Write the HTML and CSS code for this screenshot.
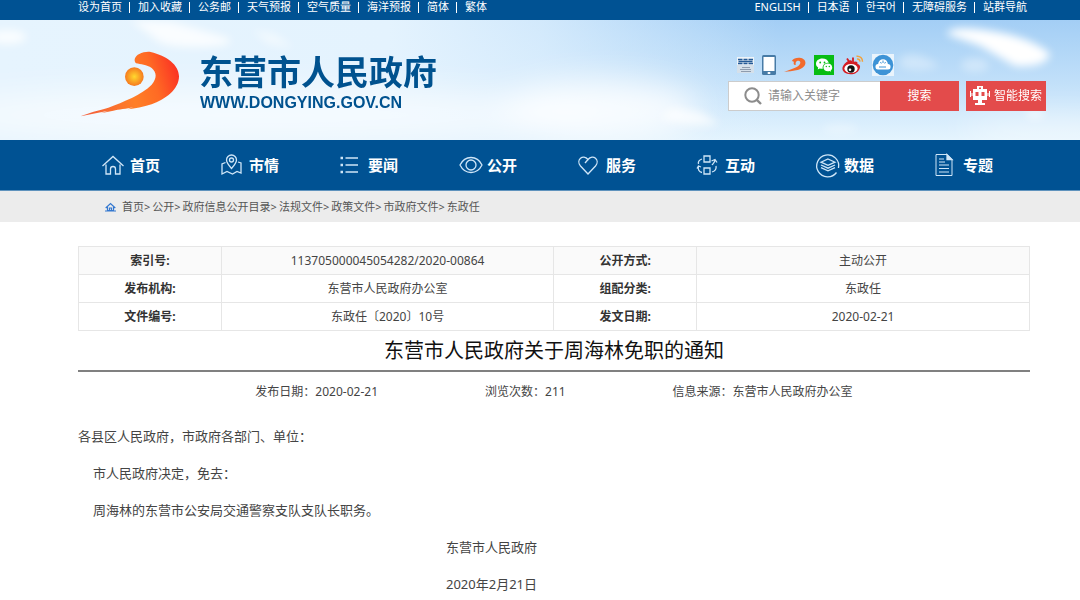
FILE: index.html
```html
<!DOCTYPE html>
<html lang="zh-CN">
<head>
<meta charset="utf-8">
<title>东营市人民政府关于周海林免职的通知</title>
<link rel="stylesheet" href="styles.css">
</head>
<body>
<div class="topbar">
  <ul class="links">
    <li><a href="#">设为首页</a></li><li><a href="#">加入收藏</a></li><li><a href="#">公务邮</a></li><li><a href="#">天气预报</a></li><li><a href="#">空气质量</a></li><li><a href="#">海洋预报</a></li><li><a href="#">简体</a></li><li><a href="#">繁体</a></li>
  </ul>
  <ul class="links">
    <li><a href="#">ENGLISH</a></li><li><a href="#" lang="ja">日本语</a></li><li><a href="#" lang="ko">한국어</a></li><li><a href="#">无障碍服务</a></li><li><a href="#">站群导航</a></li>
  </ul>
</div>

<header class="header">
  <svg class="sky" viewBox="0 0 1080 120" preserveAspectRatio="none" aria-hidden="true">
    <defs>
      <linearGradient id="skyV" x1="0" y1="0" x2="0" y2="1"><stop offset="0" stop-color="#a3cef5"/><stop offset=".5" stop-color="#c0dff9"/><stop offset="1" stop-color="#e4f4fe"/></linearGradient>
      <linearGradient id="skyH" x1="0" y1="0" x2="1" y2="0"><stop offset="0" stop-color="#e6f4fe"/><stop offset=".36" stop-color="#e4f3fe"/><stop offset=".5" stop-color="#e2f2fe" stop-opacity=".75"/><stop offset=".72" stop-color="#e2f2fe" stop-opacity="0"/></linearGradient>
      <filter id="soft" x="-30%" y="-60%" width="160%" height="220%"><feGaussianBlur stdDeviation="4"/></filter>
      <filter id="haze" x="-50%" y="-80%" width="200%" height="260%"><feGaussianBlur stdDeviation="16"/></filter>
    </defs>
    <rect width="1080" height="120" fill="url(#skyV)"/>
    <rect width="1080" height="120" fill="url(#skyH)"/>
    <g fill="#fff" filter="url(#haze)">
      <ellipse cx="600" cy="90" rx="100" ry="30" opacity=".8"/>
      <ellipse cx="260" cy="95" rx="340" ry="28" opacity=".6"/>
      <ellipse cx="1050" cy="112" rx="90" ry="14" opacity=".5"/>
    </g>
    <g fill="#fff" filter="url(#soft)">
      <path d="M130 0L172 2L228 18Q240 27 190 27Q160 27 152 16Z" opacity=".8"/>
      <path d="M252 10L275 14L294 28L268 24Z" opacity=".5"/>
      <ellipse cx="8" cy="17" rx="18" ry="7" opacity=".8"/>
      <path d="M672 88L700 92L720 104Q690 108 660 98Z" opacity=".7"/>
      <path d="M946 14Q952 5 985 10Q1030 16 1050 34Q1046 48 1015 46L980 26Z"/>
      <path d="M900 38Q915 28 940 46Q915 54 900 46Z" opacity=".35"/>
      <ellipse cx="975" cy="45" rx="14" ry="7" opacity=".35"/>
      <ellipse cx="840" cy="109" rx="18" ry="5" opacity=".3"/>
      <ellipse cx="1035" cy="94" rx="10" ry="5" opacity=".5"/>
    </g>
  </svg>
  <a class="brand" href="#">
    <svg class="brand-mark" viewBox="30 34 300 198" aria-hidden="true">
      <defs>
        <linearGradient id="flame" x1="0" y1=".6" x2="1" y2=".4"><stop offset="0" stop-color="#f4603a"/><stop offset=".5" stop-color="#ff7f27"/><stop offset=".75" stop-color="#ff6a24"/><stop offset="1" stop-color="#fb3524"/></linearGradient>
        <radialGradient id="sun"><stop offset="0" stop-color="#ffd92e"/><stop offset="1" stop-color="#f67a1f"/></radialGradient>
      </defs>
      <path fill="url(#flame)" d="M198 71C190 63 194 49 208 43C218 37 234 35 242 37C290 48 327 76 327 110C327 150 285 180 245 194C220 202 195 206 174 209L190 202C170 208 145 209 130 213L92 221L115 213L32 230C50 221 90 211 115 204C160 187 215 165 245 135C262 115 260 98 245 85C230 75 212 74 198 71Z"/>
      <circle cx="193" cy="111" r="28" fill="url(#sun)"/>
    </svg>
    <span class="brand-text">
      <span class="brand-name">东营市人民政府</span>
      <span class="brand-url">WWW.DONGYING.GOV.CN</span>
    </span>
  </a>
  <div class="tools">
    <div class="apps">
      <a href="#" aria-label="服务版"><svg width="17" height="16" viewBox="0 0 17 16"><rect width="17" height="16" fill="#d5e0ea"/><path d="M0 0h17v8H0z" fill="#eef4f9"/><path d="M1 2.500h4.500M6.500 2.500h4M11.500 2.500H16M1.500 4.500h14M1 6.500h4.500M6.500 6.500h4M11.500 6.500H16" stroke="#245a96" stroke-width="1.300"/><path d="M5 10.500h8M3 12.500h11M4 14.500h10" stroke="#8e9cae"/></svg></a>
      <a href="#" aria-label="手机版"><svg width="14" height="20" viewBox="0 0 14 20"><rect width="14" height="20" rx="1.500" fill="#477ba6"/><rect x="1.500" y="2" width="11" height="14" fill="#fff"/><rect x="5.500" y="17" width="3" height="2" rx="1" fill="#fff"/></svg></a>
      <a href="#" aria-label="东营"><svg width="22" height="18" viewBox="20 28 310 214"><path fill="#f26a2c" d="M130 80C150 38 200 30 242 33C290 38 327 70 322 110C315 165 250 200 190 210C140 220 90 226 22 234C90 205 180 180 225 145C255 118 262 85 225 76C195 70 175 105 188 132C165 140 150 125 158 100C160 88 150 82 130 80Z"/></svg></a>
      <a href="#" aria-label="微信"><svg width="20" height="20" viewBox="0 0 20 20"><rect width="20" height="20" fill="#08bd13"/><path d="M8.500 3.500C4.500 3.500 2 6 2 8.700c0 1.600.9 2.900 2.200 3.900L3.700 14.500l2.100-1c1 .3 2 .4 3 .3C8 10.500 10.500 7.800 14.800 7.800 14 5 11.500 3.500 8.500 3.500z" fill="#fff"/><path d="M18.200 12.400c0-2.200-2-3.900-4.400-3.900s-4.400 1.700-4.400 3.900 2 3.900 4.400 3.900c.6 0 1.200-.1 1.800-.3l1.500.8-.4-1.400c.9-.7 1.500-1.800 1.500-3z" fill="#fff"/><g fill="#08bd13"><circle cx="6.200" cy="7.500" r=".9"/><circle cx="10.500" cy="7.500" r=".9"/><circle cx="12.300" cy="11.500" r=".7"/><circle cx="15.300" cy="11.500" r=".7"/></g></svg></a>
      <a href="#" aria-label="微博"><svg width="22" height="20" viewBox="0 0 22 20"><path d="M7.500 5.500c1.500-.5 3 .2 2.700 1.800 3-1.200 5.800-1 5.300 1.600 2.200.6 3 2 2.400 4-1 3.800-5 6.400-9.400 6.400S.4 17 .4 13.600C.4 10.500 4 6.500 7.500 5.500z" fill="#d41c24"/><path d="M5 3.500l2 3M11 2.500v5" stroke="#d41c24" stroke-width="1.800"/><ellipse cx="9" cy="13.500" rx="6.600" ry="4.500" fill="#fff"/><circle cx="9" cy="14" r="3.700" fill="#111"/><circle cx="8" cy="14.800" r="1.300" fill="#fff"/><path d="M14.500 1.200c3.500-.5 6.300 2 6 5.600M15 4c1.900-.2 3 1 2.800 2.700" fill="none" stroke="#f3a13a" stroke-width="1.500"/></svg></a>
      <a href="#" aria-label="云平台"><svg width="22" height="22" viewBox="0 0 22 22"><rect width="22" height="22" fill="#eaf4fc"/><circle cx="11" cy="11" r="10.300" fill="#3d93d6"/><path d="M6 10.500C6.500 3.500 15.500 3.500 16 10.500z" fill="#fff"/><rect x="3.500" y="10" width="15" height="5.500" rx="2.500" fill="#fff"/><path d="M11 6.500V9M8.500 8l.8 1.500M13.500 8l-.8 1.500M7 13h7" stroke="#3d93d6"/></svg></a>
    </div>
    <form class="search">
      <label class="search-box">
        <svg width="18" height="18" viewBox="0 0 18 18" aria-hidden="true"><circle cx="8" cy="8" r="6.700" fill="none" stroke="#8c8c8c" stroke-width="2"/><path d="M12.800 12.800L17 17" stroke="#8c8c8c" stroke-width="2.400"/></svg>
        <input type="text" placeholder="请输入关键字" aria-label="请输入关键字">
      </label>
      <button class="btn btn-search" type="button">搜索</button>
      <button class="btn btn-smart" type="button"><svg width="20" height="20" viewBox="0 0 20 20" aria-hidden="true"><path fill="#fff" fill-rule="evenodd" d="M7 0h6v3h4v11h-5v3h3v2H5v-2h3v-3H3V3h4zM9 1.500V3h2V1.500zM5.500 6v4h3V6zM11.500 6v4h3V6z"/><path d="M.5 5v6M19.500 5v6M2 7v3M18 7v3" stroke="#fff"/></svg>智能搜索</button>
    </form>
  </div>
</header>

<nav class="nav">
  <a href="#"><svg viewBox="1 0 24 24"><path d="M1.500 13L12 3.500 22.500 13M5 11.500v9.500h4.500v-5a2.500 2.500 0 0 1 5 0v5H19v-9.500"/></svg>首页</a>
  <a href="#"><svg viewBox="1 0 24 24"><path d="M11.500 15.500C8 11.500 6.500 9.500 6.500 7a5 5 0 0 1 10 0c0 2.500-1.500 4.500-5 8.500z"/><circle cx="11.500" cy="7" r="2"/><path d="M5.500 9.500L2 11v10l5-2.500 5.500 2.500 4.500-2.500 4 1.500V10l-3-1"/></svg>市情</a>
  <a href="#"><svg viewBox="3 0 24 24"><path d="M8.500 5H21M8.500 12H21M8.500 19H21" stroke-width="1.600"/><path d="M3.500 5H6M3.500 12H6M3.500 19H6" stroke-width="2.400"/></svg>要闻</a>
  <a href="#"><svg viewBox="0 0 24 24"><path d="M1 12C6 2 18 2 23 12 18 22 6 22 1 12z"/><circle cx="12" cy="12" r="5"/></svg>公开</a>
  <a href="#"><svg viewBox="2 0 24 24"><path d="M12 21L4.500 13C-.5 7 7 .5 12 6.500 17 .5 24.500 7 19.500 13z"/><path d="M12 6.500L9 10"/></svg>服务</a>
  <a href="#"><svg viewBox="2 0 24 24"><path d="M9 3h6v6H9zM9 15h6v6H9zM7 6C4 7 3 9 3.500 11M3.500 13c-1 3 .5 6 3.500 6.500M2 15.500l1.500-2.500L6 14M17 19c3-1 4.500-3.500 4-6M17 12c1-1.500 3-2.500 3-5.500M16.500 8L20 6.500l2 3"/></svg>互动</a>
  <a href="#"><svg viewBox="0 0 24 24"><path d="M20.500 19.500A11 11 0 1 1 22.500 15"/><path d="M12 6l7 3.200-7 3.200-7-3.200zM5 12l7 3.200 7-3.200M5 14.600l7 3.200 7-3.200"/></svg>数据</a>
  <a href="#"><svg viewBox="3 0 24 24"><path d="M4 1.500h11l5 5v16H4zM7 6h5M7 9h6M7 12h10M7 15.500h10M7 19h10" stroke-width="1"/><path d="M15 1.500v5h5z" fill="#cfe6f8"/></svg>专题</a>
</nav>

<div class="crumbs">
  <svg width="11" height="10" viewBox="0 0 11 10" aria-hidden="true"><path d="M.7 6L5.500 1.500 10.300 6M2.500 5v3.500h6V5M4.500 8V6h2v2M0 9h11" fill="none" stroke="#3478d0" stroke-width="1.200"/></svg>
  <ol>
    <li><a href="#">首页</a></li><li><a href="#">公开</a></li><li><a href="#">政府信息公开目录</a></li><li><a href="#">法规文件</a></li><li><a href="#">政策文件</a></li><li><a href="#">市政府文件</a></li><li><a href="#">东政任</a></li>
  </ol>
</div>

<main class="page">
  <table class="info">
    <tr><th scope="row">索引号:</th><td>113705000045054282/2020-00864</td><th scope="row">公开方式:</th><td>主动公开</td></tr>
    <tr><th scope="row">发布机构:</th><td>东营市人民政府办公室</td><th scope="row">组配分类:</th><td>东政任</td></tr>
    <tr><th scope="row">文件编号:</th><td>东政任〔2020〕10号</td><th scope="row">发文日期:</th><td>2020-02-21</td></tr>
  </table>
  <h1>东营市人民政府关于周海林免职的通知</h1>
  <div class="meta"><span>发布日期：2020-02-21</span><span>浏览次数：211</span><span>信息来源：东营市人民政府办公室</span></div>
  <article class="body">
    <p>各县区人民政府，市政府各部门、单位：</p>
    <p class="indent">市人民政府决定，免去：</p>
    <p class="indent">周海林的东营市公安局交通警察支队支队长职务。</p>
    <div class="sign"><p>东营市人民政府</p><p>2020年2月21日</p></div>
  </article>
</main>
</body>
</html>
```
FILE: styles.css
```css
* { box-sizing: border-box; }
body, p, h1, ul, ol { margin: 0; padding: 0; }
body {
  background: #fff;
  color: #444;
  font: 12px/20px "Noto Sans", "Noto Sans CJK SC", "Noto Sans CJK KR", sans-serif;
}
a { color: inherit; text-decoration: none; }
ul, ol { list-style: none; }
svg { display: block; flex: none; }

.topbar {
  display: flex;
  justify-content: space-between;
  padding: 0 53px 6px 78px;
  background: #005293;
  color: #fff;
  font-size: 11px;
  line-height: 14px;
}
.links { display: flex; align-items: center; }
.links li { display: flex; align-items: center; white-space: nowrap; }
.links li + li::before {
  content: "";
  width: 1px;
  height: 11px;
  margin: 0 8px 0 7px;
  background: #fff;
}

.header {
  position: relative;
  display: flex;
  justify-content: space-between;
  align-items: flex-start;
  height: 120px;
  padding: 31px 34px 0 80px;
}
.sky { position: absolute; inset: 0; width: 100%; height: 100%; }
.brand { position: relative; display: flex; gap: 19px; color: #00528f; font-weight: 700; }
.brand-mark { width: 100px; height: 66px; }
.brand-text { display: flex; flex-direction: column; }
.brand-name { font-size: 34px; line-height: 42px; }
.brand-url { padding-left: 1px; font: 700 16px/20px "Liberation Sans", sans-serif; }

.tools { position: relative; padding-top: 2px; }
.apps { display: flex; align-items: center; gap: 8px; height: 24px; padding-left: 9px; }
.search { display: flex; margin-top: 4px; }
.search-box {
  display: flex;
  align-items: center;
  gap: 6px;
  width: 152px;
  height: 30px;
  padding-left: 15px;
  background: #fff;
  border: 1px solid #ccc;
  border-right: 0;
}
.search-box input {
  flex: 1;
  min-width: 0;
  padding: 0;
  border: 0;
  outline: 0;
  background: none;
  font: inherit;
}
.search-box input::placeholder { color: #8c8c8c; }
.btn {
  display: flex;
  align-items: center;
  justify-content: center;
  gap: 4px;
  height: 30px;
  padding: 0;
  border: 0;
  background: #e34b4b;
  color: #fff;
  font: inherit;
}
.btn-search { width: 79px; }
.btn-smart { width: 80px; margin-left: 7px; }

.nav {
  display: grid;
  grid-template-columns: repeat(8, 1fr);
  padding: 0 50px 0 78px;
  background: #005293;
  border-bottom: 1px solid #5f93bd;
}
.nav a {
  display: flex;
  align-items: center;
  gap: 4px;
  height: 50px;
  padding-left: 24px;
  color: #fff;
  font-size: 15px;
  font-weight: 700;
}
.nav svg { width: 24px; height: 24px; overflow: visible; fill: none; stroke: #cfe6f8; stroke-width: 1.3; }

.crumbs {
  display: flex;
  align-items: center;
  gap: 6px;
  height: 31px;
  padding-left: 105px;
  background: #ececec;
  color: #555;
  font-size: 11px;
}
.crumbs ol { display: flex; }
.crumbs li + li::before { content: ">"; margin-right: 2px; }

.page { padding: 24px 50px 0 78px; }
.info { width: 100%; border-collapse: collapse; table-layout: fixed; text-align: center; }
.info th, .info td { height: 28px; padding: 0; border: 1px solid #e6e6e6; }
.info th { width: 15%; color: #333; }
.info td { width: 35%; }
.info tr:first-child { background: #fafafa; }

h1 {
  padding: 5px 0 4px;
  border-bottom: 2px solid #808080;
  color: #111;
  font-size: 20px;
  font-weight: 400;
  line-height: 30px;
  text-align: center;
}
.meta { display: flex; justify-content: center; gap: 107px; padding: 10px 0 16px; }
.body { font-size: 13px; line-height: 37px; }
.indent { padding-left: 15px; }
.sign { margin-left: 368px; }
```
